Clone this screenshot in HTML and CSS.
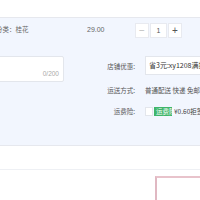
FILE: index.html
```html
<!DOCTYPE html>
<html>
<head>
<meta charset="utf-8">
<link rel="stylesheet" href="styles.css">
</head>
<body>
<div class="top"></div>
<div class="order">
  <div class="item-row">
    <div class="sku">颜色分类：桂花</div>
    <div class="price">29.00</div>
    <div class="qty">
      <span class="qbtn">−</span>
      <span class="qval">1</span>
      <span class="qbtn">+</span>
    </div>
  </div>
  <div class="extra">
    <div class="memo">
      <span class="count">0/200</span>
    </div>
    <div class="opts">
      <div class="opt">
        <span class="lbl">店铺优惠:</span>
        <div class="select">省3元:xy1208满折优惠</div>
      </div>
      <div class="opt">
        <span class="lbl">运送方式:</span>
        <span class="val">普通配送 快递 免邮</span>
      </div>
      <div class="opt">
        <span class="lbl">运费险:</span>
        <span class="chk"></span>
        <span class="tag">运费险</span>
        <span class="val dark">¥0.60拒签</span>
      </div>
    </div>
  </div>
</div>
<div class="bar"></div>
<div class="bottom">
  <div class="pay"></div>
</div>
</body>
</html>
```
FILE: styles.css
```css
html, body { margin: 0; padding: 0; }
body {
  width: 200px; height: 200px; overflow: hidden; background: #fff;
  font-family: "Noto Sans CJK SC", "Noto Sans", sans-serif;
  font-size: 6.5px; color: #666;
}
.top { height: 17px; border-bottom: 1px solid #e6e8ee; background: #fff; }
.order { background: #f2f6fe; height: 127px; overflow: hidden; }
.item-row { display: flex; align-items: center; height: 18px; padding-top: 2px; margin-left: -17px; }
.sku { width: 104px; flex-shrink: 0; white-space: nowrap; }
.price { width: 48px; flex-shrink: 0; color: #666; font-size: 7px; font-family: "Liberation Sans", sans-serif; }
.qty { display: flex; height: 15px; margin-top: 2px; }
.qbtn, .qval {
  display: flex; align-items: center; justify-content: center;
  background: #fff; border: 1px solid #e8eaf0; height: 13px; color: #555;
  font-family: "Liberation Sans", sans-serif;
}
.qbtn { width: 12px; font-size: 10px; }
.qbtn:first-child { color: #bbb; }
.qval { width: 15px; margin: 0 1px; font-size: 7px; }
.extra { display: flex; padding-top: 18px; }
.memo {
  flex-shrink: 0;
  width: 70px; height: 24px; margin-left: -8px; background: #fff;
  border: 1px solid #e3e6ec; border-radius: 2px; position: relative;
}
.count { position: absolute; right: 4px; bottom: 4px; color: #aaa; font-size: 6.5px; font-family: "Liberation Sans", sans-serif; }
.opts { flex-shrink: 0; margin-left: 43px; display: flex; flex-direction: column; }
.opt { display: flex; align-items: center; white-space: nowrap; }
.opt:nth-child(1) { height: 19px; margin-top: 0; }
.opt:nth-child(2) { height: 19px; margin-top: 5px; }
.opt:nth-child(3) { height: 12px; margin-top: 6px; }
.lbl { width: 28px; text-align: right; margin-right: 10px; color: #555; }
.select {
  background: #fff; border: 1px solid #e3e6ec; height: 17px; line-height: 17px;
  padding-left: 3px; color: #333; width: 80px; font-size: 7px;
}
.val { color: #555; }
.val.dark { color: #444; }
.chk { width: 6px; height: 7px; background: #fff; border: 1px solid #e3e6ec; margin-right: 1px; }
.tag { background: #3fb56a; color: #fff; padding: 0 2px; height: 9px; line-height: 9px; margin-right: 2px; width: 14px; }
.bar { height: 23px; border-top: 1px solid #e6e8ee; border-bottom: 1px solid #eef0f4; background: #fff; }
.bottom { padding-left: 155px; padding-top: 6px; }
.pay { width: 60px; height: 40px; border-top: 2px solid #e8c3cb; border-left: 2px solid #e0b8c2; }
```
